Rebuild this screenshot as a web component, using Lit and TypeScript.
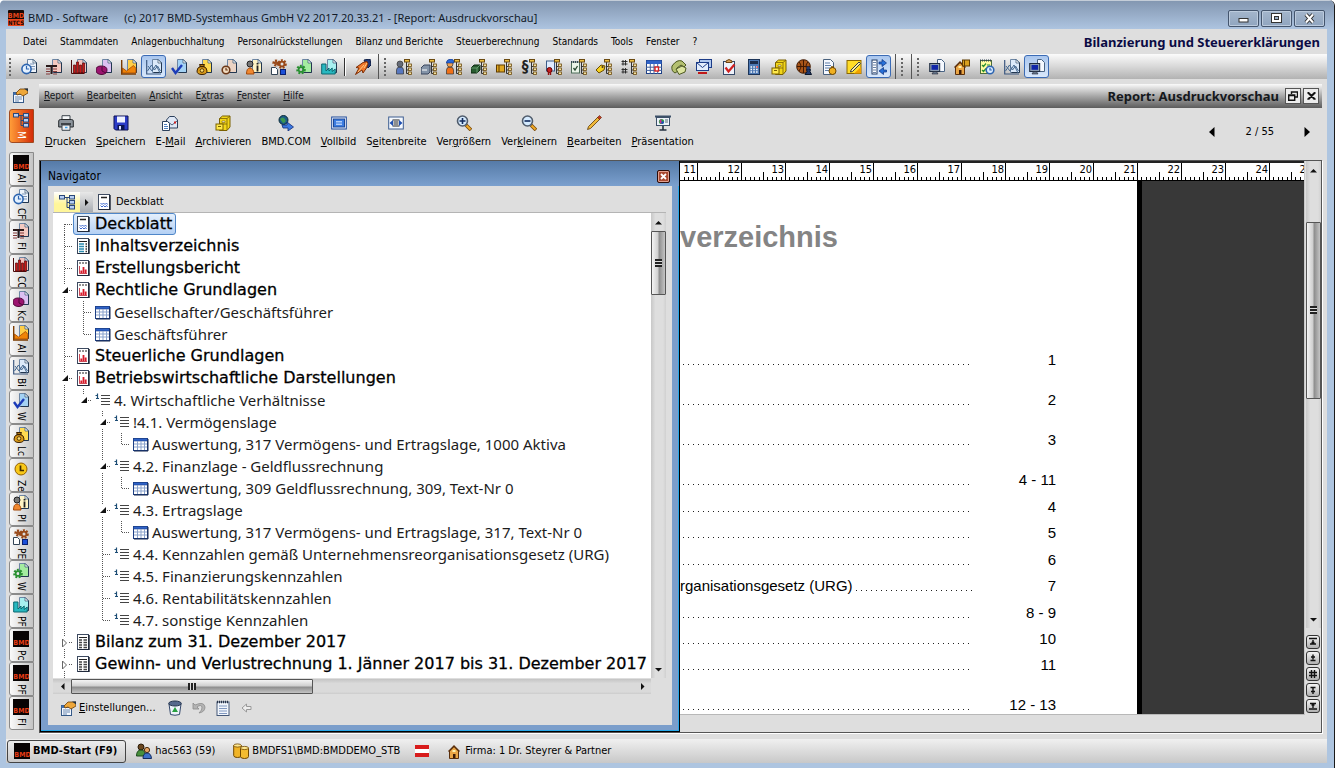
import { LitElement, html, svg, css } from 'lit';
import { customElement, property, state } from 'lit/decorators.js';
import { classMap } from 'lit/directives/class-map.js';

/* ---------- icon parts, all on a 16 x 16 grid ---------- */

const doc = (fill: string) => svg`
  <path d="M6.500 .5h6l3 3v10h-9z" fill=${fill} stroke="#6d86a4"/>
  <path d="M15.500 3.500v10h-8" fill="none" stroke="#22364f"/>
  <path d="M12 .5v3.500h3.500z" fill="#fff" stroke="#34506f" stroke-width=".7"/>`;

const gear = (x: number, y: number, r: number, c: string) => svg`
  <circle cx=${x} cy=${y} r=${r} fill="none" stroke=${c} stroke-width="2.400" stroke-dasharray="1.800 1.300"/>
  <circle cx=${x} cy=${y} r=${r - 1.2} fill="none" stroke=${c} stroke-width="1.800"/>`;

const clock = (x: number, y: number, r: number, face: string, rim: string) => svg`
  <circle cx=${x} cy=${y} r=${r} fill=${face} stroke=${rim} stroke-width="1.600"/>
  <path d="M${x} ${y - r + 1.6}V${y}h${r - 2}" fill="none" stroke=${rim} stroke-width="1.200"/>`;

const branch = svg`
  <path d="M10.500 3v11.500M10.500 7.500h2M10.500 11h2M10.500 14.500h2" fill="none" stroke="#333"/>
  <rect x="8.500" y=".5" width="5" height="2.500" fill="#f0c040" stroke="#6b4a10"/>
  <rect x="12.500" y="5" width="3" height="2.500" fill="#f4e2a0" stroke="#6b4a10" stroke-width=".8"/>
  <rect x="12.500" y="9" width="3" height="2.500" fill="#f4e2a0" stroke="#6b4a10" stroke-width=".8"/>
  <rect x="12.500" y="13" width="3" height="2.500" fill="#f4e2a0" stroke="#6b4a10" stroke-width=".8"/>`;

const person = (head: string, body: string, x = 4) => svg`
  <path d="M${x - 3.5} 15v-4q0-3 3.500-3t3.500 3v4z" fill=${body} stroke="#333" stroke-width=".7"/>
  <circle cx=${x} cy="5" r="3" fill=${head} stroke="#333" stroke-width=".7"/>`;

const house = svg`
  <path d="M1.500 8L6 3.500 10.500 8v7.500h-9z" fill="#eaa544" stroke="#5a2f0c"/>
  <path d="M.5 8.500L6 3l5.500 5.500" fill="none" stroke="#5a2f0c" stroke-width="1.400"/>
  <path d="M5 15v-4h2.500v4z" fill="#3c1c08"/><rect x="4.500" y="7" width="3" height="2" fill="#fff3b0"/>`;

const monitor = svg`
  <path d="M8.500 .5h4l3 3v9h-7z" fill="#f5f9ff" stroke="#4a6484"/>
  <rect x=".7" y="4.500" width="10" height="8" fill="#8b9bb0" stroke="#1e2c40"/>
  <rect x="2.500" y="6" width="6.500" height="4.800" fill="#1026a8"/><path d="M3 15h6l-1.500-2.500h-3z" fill="#66788c" stroke="#223" stroke-width=".6"/>`;

const cabinet = svg`
  <path d="M4.500 3.500l3-2.500h7.500v11l-3 3.500H4.500z" fill="#f2d619" stroke="#7a6000"/>
  <path d="M12 3.500V15M4.500 3.500H12l3-2.500M5 9h7" fill="none" stroke="#7a6000" stroke-width=".8"/>
  <path d="M7 6h3v1.500H7z" fill="#fff" stroke="#7a6000" stroke-width=".6"/>
  <rect x="1" y="9" width="7" height="6" fill="#ffe94a" stroke="#7a6000"/><path d="M3 11.500h3" stroke="#7a6000"/>`;

const magnifier = (plus: boolean) => svg`
  <path d="M10 10l5 5" stroke="#7a4a08" stroke-width="3.600"/><path d="M10.500 10.500l4 4" stroke="#f0aa28" stroke-width="2"/>
  <circle cx="6.500" cy="6" r="5" fill="#d5ebff" stroke="#505c6c" stroke-width="1.600"/>
  <path d=${plus ? 'M3.500 6h6M6.500 3v6' : 'M3.500 6h6'} stroke="#112a5c" stroke-width="1.600"/>`;

const hand = svg`
  <rect x="1.500" y="5.500" width="10" height="10" fill="#f4f8ff" stroke="#365a88"/><rect x="1.500" y="5.500" width="10" height="2.500" fill="#3f71b5"/>
  <path d="M3 10h7M3 12h7M3 14h4" stroke="#6a89b0"/>
  <path d="M4 6l4-4h8v4l-5 3-3-2-3 1z" fill="#eea73a" stroke="#6a3c06" stroke-width=".8"/><path d="M12 1.500h4v3z" fill="#234"/>`;

const pageIcon = (inner: unknown) => svg`
  <rect x="1.500" y=".5" width="11" height="15" fill="#fff" stroke="#3d4a60"/><path d="M13 1v15H2" fill="none" stroke="#182030" stroke-width="1.400"/>${inner}`;

const gridIcon = svg`
  <rect x=".5" y="1.500" width="15" height="13" fill="#fff" stroke="#1d3f85"/><rect x=".5" y="1.500" width="15" height="3.500" fill="#2f63c8"/>
  <path d="M0 8.200h16M0 11.400h16M4.300 5v10M8 5v10M11.700 5v10" stroke="#3f5f9c"/>`;

const icons: Record<string, unknown> = {
  logo: svg`<rect width="16" height="16" rx="1" fill="#180804"/><rect y="9" width="16" height="7" fill="#e8461c"/>
    <text x="8" y="7.500" font-size="7" font-weight="700" text-anchor="middle" fill="#e8461c">BMD</text>
    <text x="8" y="15" font-size="6" font-weight="700" text-anchor="middle" fill="#180804">NTCS</text>`,
  bmd: svg`<rect width="16" height="16" fill="#080404"/><text x="8.500" y="14" font-size="7" font-weight="700" text-anchor="middle" fill="#e83c14">BMD</text>`,
  clockdoc: svg`${doc('#eef4fb')}<path d="M9 5h4M9 7.500h5M9 10h5" stroke="#7d95b5"/>${clock(5.5, 10, 4.6, '#e4f1ff', '#2c64b0')}`,
  tdoc: svg`${doc('#f3c9c0')}<path d="M0 7h11M5.500 7v8" stroke="#281818" stroke-width="2"/><path d="M0 10h4M0 12.500h4M0 15h4M7 10h4M7 12.500h4M7 15h4" stroke="#843838"/>`,
  bars: svg`${doc('#f2c2bc')}<path d="M.5 1v13.500h13" fill="none" stroke="#4c0c0c"/><path d="M2.500 6h2v8h-2zM5.500 3h2v11h-2zM8.500 6h2v8h-2zM11.500 4h2v10h-2z" fill="#c81818" stroke="#5c0808" stroke-width=".7"/>`,
  purple: svg`${doc('#dcc0f2')}<path d="M0 11q0-4 5-4 6 0 6 4t-5 4.500q-6 0-6-4.500z" fill="#9c1470" stroke="#500838"/><path d="M6 8v4l4 2" fill="none" stroke="#500838"/>`,
  orange: svg`${doc('#ffce48')}<path d="M.7 1v14H15" fill="none" stroke="#7c3c00" stroke-width="1.400"/><path d="M1.500 14V9l4 3 5-4 2-1.500 2.500 3V14z" fill="#f08408" stroke="#a04800" stroke-width=".8"/>`,
  chart: svg`${doc('#dceafa')}<path d="M.7 1v14H15" fill="none" stroke="#3c5880" stroke-width="1.200"/><path d="M1.500 12l4-6 3 5 3-4 3 5M2 7l4 5 4-6 4 8" fill="none" stroke="#446890"/>`,
  check: svg`${doc('#a4d2f4')}<path d="M1 9l3.500 5L11 6" fill="none" stroke="#1c3cb8" stroke-width="2.400"/>`,
  bag: svg`${doc('#ffda50')}<path d="M3.500 5.500h5l-1 2q3.500 1 3.500 4.500 0 3.500-5 3.500T1 12q0-3.500 3.500-4.500z" fill="#d89a18" stroke="#3c2000"/><path d="M3.500 7.500h5" stroke="#3c2000" stroke-width="1.400"/><circle cx="6" cy="11.500" r="1.800" fill="#ffe070" stroke="#3c2000" stroke-width=".8"/>`,
  brown: svg`${doc('#ecd4c4')}${clock(5, 11, 3.8, '#f2dcc0', '#6c3818')}`,
  info: svg`${doc('#fff4c4')}<path d="M11.500 4v1.500M11.500 6.500v6" stroke="#222" stroke-width="1.800"/><circle cx="4" cy="5" r="3" fill="#777" stroke="#222"/><path d="M.5 15q0-6 3.500-6t4 6z" fill="#f08830" stroke="#a44808"/>`,
  gears: svg`${gear(11, 5, 3.6, '#984818')}${gear(5, 4, 2.4, '#984818')}<path d="M.5 8.500h4l2 2v5h-6z" fill="#fff" stroke="#345"/><rect x="9.500" y="10.500" width="5" height="5" fill="#1c50d8" stroke="#0a2070"/>`,
  green: svg`${doc('#a4eca0')}${gear(5, 10.5, 3.6, '#289030')}`,
  teal: svg`${doc('#a8f0f0')}<path d="M.7 5v10h13.500v-5l-3 2.500V9L8 12V9l-3 3V5z" fill="#28b8c0" stroke="#0c6870"/>`,
  launch: svg`<path d="M9 1l6-1 1 6-3 3z" fill="#203c80" stroke="#0c1c44"/><path d="M.5 15.500L4 9 1 8.500 8 3.500 12 2.500 13 5 11.500 9 8 14l-1-3z" fill="#f0782c" stroke="#7c2c04"/><path d="M3 13l6-7M9 9l3-5" stroke="#ffca80"/>`,
  person: svg`${person('#666c78', '#5878c0', 4)}${branch}`,
  printer2: svg`<path d="M0 9l3-3h6v7l-2 2H0z" fill="#8494a8" stroke="#38445c"/><path d="M1 11h5" stroke="#fff"/>${branch}`,
  worker: svg`${person('#f0a050', '#f07018', 4)}<path d="M0 4q1-4 5-4 3 0 3 4z" fill="#2868d8" stroke="#103080" stroke-width=".6"/>${branch}`,
  box: svg`<path d="M0 9l3-3h6v5l-3 3H0z" fill="#285c30" stroke="#0c2810"/><path d="M0 9h6l3-3M6 9v5" stroke="#80b488" stroke-width=".7" fill="none"/>${branch}`,
  book: svg`<rect x=".5" y="6" width="8" height="7" fill="#e0a820" stroke="#603c00"/><path d="M3 6v7" stroke="#603c00"/>${branch}`,
  para: svg`<text x="4" y="13" font-size="15" font-weight="700" text-anchor="middle" fill="#222">§</text>${branch}`,
  cert: svg`<rect x=".5" y="2" width="8" height="10" fill="#e0ecff" stroke="#3c5c88"/><circle cx="3.500" cy="11" r="2.500" fill="#c82020" stroke="#600"/><path d="M2.500 13v3M4.500 13v3" stroke="#901010" stroke-width="1.400"/>${branch}`,
  list: svg`<rect x=".5" y="3" width="8" height="11" fill="#eaf4e8" stroke="#4c6c58"/><path d="M0 3h9" stroke="#345" stroke-dasharray="1 1" stroke-width="2"/><path d="M2.500 9l1.500 2L6.500 7" stroke="#284830" fill="none" stroke-width="1.300"/>${branch}`,
  tag: svg`<path d="M0 11l5-5 4 1-1 4-5 3z" fill="#f4d020" stroke="#6c4c00"/><circle cx="6.500" cy="8" r="1" fill="#432"/>${branch}`,
  hash: svg`<path d="M2 1v5.500M4.500 1v5.500M.5 2.500h6M.5 5h6M2 9v5.500M4.500 9v5.500M.5 10.500h6M.5 13h6" stroke="#222" stroke-width=".9"/>${branch}`,
  calendar: svg`${gridIcon}<rect x="9" y="8" width="3.500" height="4" fill="#fff" stroke="#d82020" stroke-width="1.400"/>`,
  phone: svg`<path d="M1 7q5-7 10-5l4 4-2 2-3-2-4 3 1 3-3 2q-4-2-3-7z" fill="#b4c070" stroke="#4c5820"/><path d="M5 10l6-3 4 2-1 4-6 2.500z" fill="#dce4a0" stroke="#4c5820"/>`,
  mails: svg`<rect x="3.500" y=".5" width="12" height="8" fill="#b0c8ee" stroke="#1c3c88"/><rect x=".5" y="3.500" width="12" height="8" fill="#e4eefc" stroke="#1c3c88"/><path d="M.5 3.500l6 5 6-5" fill="none" stroke="#1c3c88"/><path d="M2 14h9" stroke="#c01818" stroke-width="2"/>`,
  clip: svg`<rect x="2.500" y="2.500" width="11" height="13" fill="#eef2fa" stroke="#344868"/><path d="M5 3.500V2q3-3 6 0v1.500z" fill="#d8a058" stroke="#6c4010"/><path d="M4.500 8.500l3 4 6-7" fill="none" stroke="#d02020" stroke-width="2.200"/>`,
  calc: svg`<rect x="2.500" y=".5" width="11" height="15" fill="#4c78b4" stroke="#1c3458"/><rect x="4" y="2" width="8" height="3" fill="#1c2c4c"/><path d="M4.500 8h7.500M4.500 10.500h7.500M4.500 13h7.500" stroke="#fff" stroke-width="1.500" stroke-dasharray="1.500 1.300"/><path d="M10.500 8h1.500" stroke="#f33" stroke-width="1.500"/>`,
  cabinet,
  basket: svg`<circle cx="7.500" cy="7.500" r="6.800" fill="#a85418" stroke="#401800"/><path d="M7.500 1v13M1 7.500h13M3 3q4 4 0 9M12 3q-4 4 0 9" stroke="#401800" fill="none"/><path d="M9 15.500h6.500l-1.500-3 .5-2h-4l.5 2z" fill="#20386c" stroke="#081428"/><circle cx="12.300" cy="9" r="1.800" fill="#20386c"/>`,
  moneydoc: svg`<path d="M2.500 .5h7l3 3v12h-10z" fill="#f6f9ff" stroke="#48607c"/><path d="M4 4h5M4 6.500h6M4 9h6M4 11.500h4" stroke="#5c7ca8"/><circle cx="11.500" cy="12" r="3.500" fill="#f0b020" stroke="#704800"/><path d="M10 8h3" stroke="#704800" stroke-width="1.500"/>`,
  note: svg`<rect x="1" y="1.500" width="14" height="13" fill="#ffdc28" stroke="#8c6800"/><path d="M8 14.500h7V8z" fill="#f0a000"/><path d="M5 11l8-8 1.500 1.500-8 8L4.500 13z" fill="#fff2a0" stroke="#30384c"/>`,
  switch: svg`<rect x="1" y="1" width="5" height="14" fill="#fff" stroke="#243c64"/><path d="M2 3.500h3M2 6h3M2 8.500h3M2 11h3M2 13.500h3" stroke="#6c84a8"/><path d="M8 3h3V.5L15.500 4 11 7.500V5H8zM15.500 11h-3V8.500L8 12l4.500 3.500V13h3z" fill="#2870d8" stroke="#0c3080" stroke-width=".7"/>`,
  monitor,
  housebox: svg`${house}<rect x="8.500" y="1" width="7" height="6" fill="#d8a020" stroke="#603c00"/><path d="M10.500 1v6" stroke="#603c00"/>`,
  todo: svg`<rect x="1.500" y="1.500" width="11" height="13" fill="#fffba0" stroke="#4c6c3c"/><path d="M1 1.500h12" stroke="#345" stroke-width="2" stroke-dasharray="1 1"/><path d="M3 6l1.500 1.500L7 4.500M3 11l1.500 1.500L7 9.500M8 6h3" stroke="#289030" fill="none" stroke-width="1.200"/>${clock(11, 11, 3.8, '#dcecff', '#2c64b0')}`,
  hand,
  tree: svg`<path d="M5 3.500h5M8 3.500v10h2M8 8.500h2" stroke="#2c4878" fill="none"/><rect x=".5" y="1.500" width="5" height="3.500" fill="#b8d0f4" stroke="#2c4878"/><rect x="10.500" y="1.500" width="5" height="3.500" fill="#b8d0f4" stroke="#2c4878"/><rect x="10.500" y="6.500" width="5" height="3.500" fill="#b8d0f4" stroke="#2c4878"/><rect x="10.500" y="11.500" width="5" height="3.500" fill="#b8d0f4" stroke="#2c4878"/>`,
  clock: svg`<circle cx="8" cy="8" r="6" fill="#f8c818" stroke="#946000"/><path d="M7.500 4.500v5H11" stroke="#402c00" stroke-width="1.700" fill="none"/>`,
  print: svg`<path d="M4 5V.7h8V5z" fill="#f6f8fa" stroke="#3c444c"/><path d="M.7 6q0-1.500 2-1.500h10.600q2 0 2 1.500v6H.7z" fill="#8c949c" stroke="#24282c"/><path d="M3 9h10" stroke="#24282c" stroke-width="1.600"/><path d="M4 10h8v5.300H4z" fill="#eef2f6" stroke="#3c444c"/><path d="M7 12.500h2.500" stroke="#40a0e8" stroke-width="1.600"/>`,
  save: svg`<path d="M1 1h14v14H2.500L1 13.500z" fill="#2c3cc8" stroke="#0c1050"/><rect x="4" y="1.500" width="8" height="6" fill="#eef2ff"/><rect x="4.500" y="10" width="7" height="5" fill="#0c1450"/><rect x="6" y="11" width="2" height="3.500" fill="#dfe6ff"/>`,
  mail: svg`<path d="M4.500 5l3-3.500h5L15.500 5v8h-11z" fill="#dfe8f6" stroke="#2c405c"/><path d="M5 6l5 4 5-4" fill="none" stroke="#2c405c" stroke-width=".8"/><rect x="12" y="6.500" width="2" height="2" fill="#d02020"/><path d="M.5 6.500h5l2 2v7h-7z" fill="#fff" stroke="#2c405c"/><path d="M2 9.500h3M2 11.500h4M2 13.500h4" stroke="#5080c0"/>`,
  globe: svg`<circle cx="5.500" cy="5" r="4.500" fill="#1c5c88" stroke="#0c2c38"/><path d="M2 4q3-3 5 0t-2 4z" fill="#3c9850"/><path d="M4 10h5V7l6.500 5L10 16v-3H5z" fill="#3c78e0" stroke="#102c78" stroke-width=".8"/>`,
  screen: svg`<rect x=".7" y="2" width="14.600" height="12" fill="#f2f6ff" stroke="#1c4898"/><rect x="2.500" y="4" width="11" height="8" fill="#3c7ce0" stroke="#1c4898"/><path d="M5 6.500h6M5 8h6M5 9.500h6" stroke="#cfe2ff" stroke-width=".8"/>`,
  width: svg`<rect x=".7" y="2" width="14.600" height="12" fill="#f6faff" stroke="#3c5c90"/><path d="M4.500 5h7M5.500 7h5M5.500 9h5M4.500 11h7" stroke="#222"/><path d="M1.500 8L5 5v6zM14.500 8L11 5v6z" fill="#2050b0"/>`,
  zoomin: magnifier(true),
  zoomout: magnifier(false),
  pencil: svg`<path d="M1.500 14.500l1-3 9.500-9.500 2 2-9.500 9.500z" fill="#f0b838" stroke="#5c3804" stroke-width=".8"/><path d="M11.500 2.500l2-2 2 2-2 2z" fill="#c03c20" stroke="#5c1804" stroke-width=".6"/>`,
  present: svg`<path d="M0 1.500h16" stroke="#3c5068" stroke-width="2"/><rect x="1.500" y="2.500" width="13" height="8" fill="#eef3fa" stroke="#3c5068"/><circle cx="6.500" cy="6.500" r="2.600" fill="#28a040"/><path d="M6.500 6.500V4a2.600 2.600 0 0 0 0 5z" fill="#d02890"/><path d="M6.500 6.500v2.600a2.600 2.600 0 0 0 2.500-2.600z" fill="#2040d0"/><path d="M10 5h3M10 7h3" stroke="#567"/><path d="M8 11v3.500M4.500 15h7" stroke="#243040" stroke-width="1.600"/>`,
  cover: pageIcon(svg`<path d="M4 3.500h6" stroke="#222" stroke-width="1.400"/><path d="M3.500 9l1.500 1.500L6.500 9 8 10.500 9.500 9l1 1.500M3.500 11.500L5 13l1.500-1.500L8 13l1.500-1.500 1 1.500" stroke="#3c68d0" fill="none"/>`),
  toc: pageIcon(svg`<path d="M3 3.500h8" stroke="#222"/><path d="M3 6h5M3 8.500h5M3 11h5M3 13.500h5" stroke="#2c8cb0" stroke-width="1.500"/><path d="M9.500 6h1.500M9.500 8.500h1.500M9.500 11h1.500M9.500 13.500h1.500" stroke="#333" stroke-width="1.500"/>`),
  report: pageIcon(svg`<path d="M3 3h8" stroke="#222" stroke-dasharray="2 1"/><path d="M3.500 6v7.500H11" stroke="#c01c2c" fill="none" stroke-width=".8"/><path d="M5.300 13v-2.500M7.500 13V7M9.700 13V9.500" stroke="#d81c2c" stroke-width="1.800"/>`),
  ledger: pageIcon(svg`<path d="M3 3.500h8" stroke="#222"/><path d="M3 6h3M3 8.500h3M3 11h3M3 13.500h3M7.500 6H11M7.500 8.500H11M7.500 11H11M7.500 13.500H11" stroke="#444" stroke-width="1.300"/>`),
  grid: svg`<rect x=".5" y="2.500" width="14" height="12" fill="#fff" stroke="#1d3f85"/><rect x=".5" y="2.500" width="14" height="2.500" fill="#2f63c8" stroke="#1d3f85" stroke-width=".6"/><path d="M1 8h13M1 11h13M4.500 5v9M8 5v9M11.500 5v9" stroke="#8ba3cc"/><path d="M15 3v12H1" fill="none" stroke="#14264c"/>`,
  text: svg`<path d="M.5 3.500h2M2.500 1.500v5M1 6.500h3" stroke="#1c4c74" fill="none" stroke-width="1.200"/><path d="M6 3.500h9M6 6.500h9M6 9.500h9M6 12.500h9" stroke="#444"/>`,
  trash: svg`<path d="M2 4l1.500 10.500q4.500 1.500 9 0L14 4z" fill="#eef4fa" stroke="#34486c"/><ellipse cx="8" cy="3.500" rx="6.300" ry="2.500" fill="#56698c" stroke="#24344c"/><path d="M8 7l3 5H5z" fill="#28a040"/>`,
  undo: svg`<path d="M2 3v6h6L6 7q4-3 5 0 .5 3-3 6 6-1 6-6-1-6-10-2z" fill="#b4b4b4" stroke="#8c8c8c" stroke-width=".8"/>`,
  notepad: svg`<rect x="2" y="2" width="12" height="13.500" fill="#f2f6fc" stroke="#445878"/><path d="M2 2h12" stroke="#283448" stroke-width="2.400" stroke-dasharray="1 1"/><path d="M4 6h8M4 8.500h8M4 11h8M4 13.500h8" stroke="#8098c0"/>`,
  back: svg`<path d="M3 8l4.500-4v2.500H12v3H7.500V12z" fill="#eee" stroke="#999"/>`,
  users: svg`<circle cx="5" cy="4" r="3" fill="#6c4820" stroke="#2c1c08"/><path d="M.5 13q0-6 4.500-6t4.500 6z" fill="#48903c" stroke="#1c481c"/><circle cx="11" cy="7" r="2.600" fill="#e8a868" stroke="#482808"/><path d="M7 15.500q0-5.500 4-5.500t4.500 5.500z" fill="#3c70c8" stroke="#142c60"/>`,
  db: svg`<path d="M.7 2.500v10q0 2 3.800 2t3.800-2v-10z" fill="#f0b428" stroke="#704800"/><ellipse cx="4.500" cy="2.500" rx="3.800" ry="1.600" fill="#ffe890" stroke="#704800" stroke-width=".8"/><path d="M7.500 5v8.500q0 2 4 2t4-2V5z" fill="#f4bc30" stroke="#704800"/><ellipse cx="11.500" cy="5" rx="4" ry="1.600" fill="#ffe890" stroke="#704800" stroke-width=".8"/>`,
  flag: svg`<rect x="1" y="2" width="14" height="12" fill="#fff"/><path d="M1 4h14M1 12h14" stroke="#d81c1c" stroke-width="4"/>`,
  home: svg`<g transform="translate(2 0)">${house}</g>`,
};

const icon = (name: string) => html`<svg class="icon" viewBox="0 0 16 16" width="16" height="16" aria-hidden="true">${icons[name]}</svg>`;

/* An underscore in a label stands before its access key. */
const keyed = (label: string) => {
  const i = label.indexOf('_');
  return i < 0 ? html`${label}` : html`${label.slice(0, i)}<u>${label[i + 1]}</u>${label.slice(i + 2)}`;
};

const arrow = (dir: 'up' | 'down' | 'left' | 'right') => {
  const d = { up: 'M0 5.500h7L3.500 2z', down: 'M0 2h7L3.500 5.500z', left: 'M5.500 0v7L2 3.500z', right: 'M2 0v7l3.500-3.500z' }[dir];
  return html`<svg viewBox="0 0 7 7" width="7" height="7" aria-hidden="true"><path d=${d} fill="#111" /></svg>`;
};

const menu = ['Datei', 'Stammdaten', 'Anlagenbuchhaltung', 'Personalrückstellungen', 'Bilanz und Berichte', 'Steuerberechnung', 'Standards', 'Tools', 'Fenster', '?'];
const reportMenu = ['_Report', '_Bearbeiten', '_Ansicht', 'E_xtras', '_Fenster', '_Hilfe'];
const bars: string[][] = [
  ['clockdoc', 'tdoc', 'bars', 'purple', 'orange', '*chart', 'check', 'bag', 'brown', 'info', 'gears', 'green', 'teal', '|', 'launch'],
  ['person', 'printer2', 'worker', 'box', 'book', 'para', 'cert', 'list', 'tag', 'hash', 'calendar', 'phone', 'mails', 'clip', 'calc', 'cabinet', 'basket', 'moneydoc', 'note', '*switch'],
  [],
  ['monitor', 'housebox', 'todo', 'chart', '*monitor'],
];
const actions: [string, string][] = [
  ['print', '_Drucken'], ['save', '_Speichern'], ['mail', 'E-_Mail'], ['cabinet', '_Archivieren'], ['globe', 'BMD.COM'], ['screen', '_Vollbild'],
  ['width', 'S_eitenbreite'], ['zoomin', 'Ver_größern'], ['zoomout', 'Ver_kleinern'], ['pencil', '_Bearbeiten'], ['present', '_Präsentation'],
];
const tabs: [string, string][] = [
  ['bmd', 'AI'], ['clockdoc', 'CF'], ['tdoc', 'FI'], ['bars', 'CO'], ['purple', 'Kc'], ['orange', 'AI'], ['chart', 'Bi'], ['check', 'W'], ['bag', 'Lc'],
  ['clock', 'Ze'], ['info', 'PI'], ['gears', 'PE'], ['green', 'W'], ['teal', 'PF'], ['bmd', 'Pc'], ['bmd', 'PF'], ['bmd', 'FI'],
];

/* guides: one letter a column; f first, v line, t tee, l corner, o blank; upper case adds an expander */
interface Node { guides: string; icon: string; text: string; open?: boolean }
const nodes: Node[] = [
  { guides: 'f', icon: 'cover', text: 'Deckblatt' },
  { guides: 't', icon: 'toc', text: 'Inhaltsverzeichnis' },
  { guides: 't', icon: 'report', text: 'Erstellungsbericht' },
  { guides: 'T', icon: 'report', text: 'Rechtliche Grundlagen', open: true },
  { guides: 'vt', icon: 'grid', text: 'Gesellschafter/Geschäftsführer' },
  { guides: 'vl', icon: 'grid', text: 'Geschäftsführer' },
  { guides: 't', icon: 'report', text: 'Steuerliche Grundlagen' },
  { guides: 'T', icon: 'report', text: 'Betriebswirtschaftliche Darstellungen', open: true },
  { guides: 'vL', icon: 'text', text: '4. Wirtschaftliche Verhältnisse', open: true },
  { guides: 'voT', icon: 'text', text: '!4.1. Vermögenslage', open: true },
  { guides: 'vovl', icon: 'grid', text: 'Auswertung, 317 Vermögens- und Ertragslage, 1000 Aktiva' },
  { guides: 'voT', icon: 'text', text: '4.2. Finanzlage - Geldflussrechnung', open: true },
  { guides: 'vovl', icon: 'grid', text: 'Auswertung, 309 Geldflussrechnung, 309, Text-Nr 0' },
  { guides: 'voT', icon: 'text', text: '4.3. Ertragslage', open: true },
  { guides: 'vovl', icon: 'grid', text: 'Auswertung, 317 Vermögens- und Ertragslage, 317, Text-Nr 0' },
  { guides: 'vot', icon: 'text', text: '4.4. Kennzahlen gemäß Unternehmensreorganisationsgesetz (URG)' },
  { guides: 'vot', icon: 'text', text: '4.5. Finanzierungskennzahlen' },
  { guides: 'vot', icon: 'text', text: '4.6. Rentabilitätskennzahlen' },
  { guides: 'vol', icon: 'text', text: '4.7. sonstige Kennzahlen' },
  { guides: 'T', icon: 'ledger', text: 'Bilanz zum 31. Dezember 2017' },
  { guides: 'T', icon: 'ledger', text: 'Gewinn- und Verlustrechnung 1. Jänner 2017 bis 31. Dezember 2017' },
  { guides: 't', icon: 'ledger', text: '' },
];

const guide = (g: string, open?: boolean) => {
  const expander = g !== g.toLowerCase();
  const k = g.toLowerCase();
  const paths: Record<string, string> = {
    f: 'M10.500 11v11M11 11.500h9', v: 'M10.500 0v22', t: 'M10.500 0v22M11 11.500h9', l: 'M10.500 0v11M11 11.500h9', o: '',
  };
  const mark = expander
    ? svg`<rect x="6" y="5" width="9" height="13" fill="#fff"/>${open
        ? svg`<path d="M14 8v6H8z" fill="#111"/>`
        : svg`<path d="M8.500 8v8l4-4z" fill="#fff" stroke="#666"/>`}`
    : '';
  return html`<svg class="guide" viewBox="0 0 19 22" width="19" height="22" aria-hidden="true">
    <path d=${paths[k]} fill="none" stroke="#555" stroke-dasharray="1 1" shape-rendering="crispEdges" />${mark}</svg>`;
};

const contents: [string, string, string][] = [
  ['', '1', 'sec'], ['', '2', 'sec'], ['', '3', 'sec'], ['', '4 - 11', 'sec'], ['', '4', 'odd'], ['', '5', ''], ['', '6', 'odd'],
  ['rganisationsgesetz (URG)', '7', ''], ['', '8 - 9', 'odd'], ['', '10', ''], ['', '11', ''], ['', '12 - 13', 'sec'],
];

const ticks = svg`<path d="M22.500 11v8" stroke="#000"/>
  <path d="M4.500 16v3M9.500 16v3M13.500 16v3M18.500 16v3M26.500 16v3M31.500 16v3M35.500 16v3M40.500 16v3" stroke="#000"/>`;

@customElement('scroll-bar')
export class ScrollBar extends LitElement {
  @property({ type: Boolean, reflect: true }) horizontal = false;
  @property({ type: Number }) before = 0;
  @property({ type: Number }) size = 30;

  static styles = css`
    :host { display: flex; flex-direction: column; width: 15px; box-sizing: border-box; background: linear-gradient(90deg, #c8c8c8, #dedede 30%, #dedede 80%, #d0d0d0); }
    :host([horizontal]) { flex-direction: row; width: auto; height: 15px; background: linear-gradient(#c4c4c4, #dadada 30%, #dadada 85%, #cccccc); }
    button { flex: none; width: 100%; height: 18px; padding: 0; border: 0; background: none; display: grid; place-items: center; }
    :host([horizontal]) button { width: 18px; height: 100%; }
    .track { flex: 1; min-height: 0; min-width: 0; display: flex; flex-direction: column; }
    :host([horizontal]) .track { flex-direction: row; }
    .thumb { flex: none; display: grid; place-items: center; box-sizing: border-box; border: 1px solid #555; border-radius: 1px; background: linear-gradient(90deg, #f4f4f4, #cfcfcf 45%, #8e8e8e 55%, #c4c4c4); }
    :host([horizontal]) .thumb { background: linear-gradient(#f4f4f4, #cfcfcf 45%, #8e8e8e 55%, #c4c4c4); }
    .grip { width: 7px; height: 8px; background: repeating-linear-gradient(#222 0 2px, #ddd 2px 3px); }
    :host([horizontal]) .grip { width: 8px; height: 7px; background: repeating-linear-gradient(90deg, #222 0 2px, #ddd 2px 3px); }
  `;

  render() {
    const side = this.horizontal ? 'width' : 'height';
    return html`
      <button aria-label="Zurück">${arrow(this.horizontal ? 'left' : 'up')}</button>
      <div class="track">
        <div style="${side}:${this.before}%"></div>
        <div class="thumb" style="${side}:${this.size}%"><span class="grip"></span></div>
      </div>
      <button aria-label="Weiter">${arrow(this.horizontal ? 'right' : 'down')}</button>`;
  }
}

@customElement('app-root')
export class AppRoot extends LitElement {
  @state() selected = 0;

  static styles = css`
    :host { display: block; height: 100vh; font: 11px/14px "DejaVu Sans Condensed", "DejaVu Sans", sans-serif; color: #000; }
    * { box-sizing: border-box; }
    button { font: inherit; color: inherit; margin: 0; padding: 0; border: 0; background: none; white-space: nowrap; }
    svg { display: block; flex: none; }
    svg text { font-family: "DejaVu Sans Condensed", sans-serif; }

    .window { height: 100%; display: flex; flex-direction: column; background: #aec5e0; border: solid #1a1a1a; border-width: 0 1px 0 0; border-radius: 5px 6px 0 0; overflow: hidden; }
    .titlebar { flex: none; height: 29px; display: flex; align-items: center; padding: 6px 9px 0 8px; border-top: 1px solid #c4cdd8; background: linear-gradient(#8397b1, #adc4e0); color: #111a28; }
    .titlebar h1 { flex: 1; display: flex; gap: 16px; margin: 0 0 0 4px; font: 11px/16px "Noto Sans", sans-serif; white-space: pre; }
    .frame-buttons { display: flex; gap: 2px; }
    .frame-buttons button { width: 31px; height: 17px; display: grid; place-items: center; border: 1px solid #44556d; border-radius: 2px; box-shadow: inset 0 0 0 1px #bccbdd; background: linear-gradient(#a4b6cc, #90a5bf); }

    .client { flex: 1; min-height: 0; display: flex; flex-direction: column; margin: 0 7px 5px 6px; background: #dedede; }
    .menubar { flex: none; height: 25px; display: flex; align-items: center; padding: 0 7px 0 17px; font-size: 10px; }
    .menubar nav { display: flex; gap: 13px; flex: 1; }
    .strong { font: bold 13px/16px "Noto Sans", sans-serif; white-space: nowrap; margin: 0; }
    .module { color: #0b0b44; }

    .toolbars { flex: none; height: 25px; display: flex; background: linear-gradient(#fbfbfb, #d8d8d8 50%, #b2b2b2); }
    .group { display: flex; padding: 0 3px 0 12px; border-right: 1px solid #555; align-items: center; }
    .group:first-child { padding-left: 10px; }
    .group:nth-child(2) { padding-right: 4px; }
    .group:last-child { border: 0; }
    .group::before { content: ""; width: 2px; height: 18px; margin-left: -7px; margin-right: 5px; background: repeating-linear-gradient(#666 0 2px, transparent 2px 4px); }
    .tool { width: 25px; height: 23px; display: grid; place-items: center; border: 1px solid transparent; border-radius: 3px; }
    .tool.on { border-color: #3b6bb5; background: linear-gradient(#a9c6ee, #d9e8fb); }
    .rule { width: 2px; height: 18px; margin: 0 4px 0 3px; background: #333; border-right: 1px solid #fff; }

    .body { flex: 1; min-height: 0; display: flex; padding-top: 5px; }
    .side { flex: none; width: 33px; padding: 0 5px 0 3px; display: flex; flex-direction: column; align-items: stretch; }
    .side .props { height: 22px; display: grid; place-items: center start; padding-left: 3px; margin-bottom: 3px; }
    .tab { flex: none; height: 34px; width: 25px; overflow: hidden; display: flex; flex-direction: column; align-items: center; gap: 3px; padding: 2px 2px 0 0; border: 1px solid #8a8a8a; border-radius: 3px 0 0 3px; background: linear-gradient(90deg, #fafafa, #c4c4c4); }
    .tab span { writing-mode: vertical-rl; font: 10px/12px "DejaVu Sans Condensed", sans-serif; }
    .tab.on { margin-bottom: 9px; color: #fff; border-color: #a04a20; background: linear-gradient(90deg, #ff9c38, #d42c08); }

    .report { flex: 1; min-width: 0; display: flex; flex-direction: column; padding-right: 5px; }
    .reportbar { flex: none; height: 24px; display: flex; align-items: center; padding: 0 3px 0 5px; background: linear-gradient(#fafafa, #a8a8a8 50%, #5c5c5c); color: #15181c; font-size: 10px; }
    .reportbar nav { display: flex; gap: 13px; flex: 1; }
    .mdi { display: flex; gap: 2px; margin-left: 6px; }
    .mdi button { width: 16px; height: 16px; display: grid; place-items: center; border: 1px solid #555; background: #ececec; }

    .actions { flex: none; height: 52px; display: flex; align-items: center; padding: 0 11px 4px 6px; }
    .actions .set { flex: 1; display: flex; gap: 10px; }
    .action { display: flex; flex-direction: column; align-items: center; gap: 4px; }
    .pager { display: flex; align-items: center; gap: 29px; }

    .viewer { flex: 1; min-height: 0; display: flex; border: 1px solid #555; margin-bottom: 6px; box-shadow: 1px 1px 0 #fff; }

    .navigator { flex: none; width: 640px; display: flex; flex-direction: column; border: solid #000; border-width: 0 1px 1px 1px; background: #7b9ecb; padding-bottom: 6px; box-shadow: inset -1px -1px 0 #28a8e8; }
    .navtitle { flex: none; height: 25px; display: flex; justify-content: space-between; align-items: center; padding: 5px 9px 0 7px; background: linear-gradient(#557aa7, #7ba0ce); }
    .navtitle h2 { margin: 0; font: inherit; font-size: 12px; line-height: 16px; }
    .close { width: 13px; height: 13px; display: grid; place-items: center; background: #a84830; border: 1px solid #2c0c08; border-radius: 2px; box-shadow: inset 0 0 0 1px #e0a090; }
    .navbody { flex: 1; min-height: 0; display: flex; flex-direction: column; margin: 0 7px 0 7px; padding: 0 6px 0 5px; background: #dedede; }
    .crumbs { flex: none; height: 26px; display: flex; align-items: center; padding: 6px 0 0 1px; }
    .crumbs .root { width: 26px; height: 20px; display: grid; place-items: center; background: linear-gradient(#fff, #fff69a 60%); }
    .crumbs .more { width: 13px; height: 20px; display: grid; place-items: center; background: linear-gradient(#e8e8e8, #a8acb2); }
    .crumbs .here { display: flex; align-items: center; gap: 3px; margin-left: 4px; }

    .treebox { flex: 1; min-height: 0; display: grid; grid-template: minmax(0, 1fr) 16px / minmax(0, 1fr) 15px; border-top: 1px solid #b4b4b4; }
    .treebox scroll-bar[horizontal] { margin-top: 1px; }
    .tree { list-style: none; margin: 0; padding: 0 0 0 1px; background: #fff; overflow: hidden; }
    .row { display: flex; height: 22px; white-space: nowrap; }
    .label { height: 22px; display: flex; align-items: center; gap: 3px; padding: 0 5px 0 2px; border: 1px solid transparent; border-radius: 3px; font: 15px/20px "Noto Sans", sans-serif; color: #1c1c1c; }
    .top .label { font: 16px/20px "DejaVu Sans", sans-serif; color: #000; -webkit-text-stroke: .3px #000; }
    .label.on { padding-right: 3px; border-color: #4f86c8; background: linear-gradient(#e4effc, #b4d0f4); }
    .navfoot { flex: none; height: 31px; display: flex; align-items: center; padding: 0 8px 3px 7px; gap: 8px; }
    .navfoot button { display: flex; align-items: center; gap: 3px; }
    .navfoot .settings { margin-right: 3px; }

    .preview { flex: 1; min-width: 0; display: flex; flex-direction: column; padding-bottom: 17px; }
    .previewrow { flex: 1; min-height: 0; display: flex; }
    .sheet { flex: 1; min-width: 0; display: flex; flex-direction: column; border-right: 1px solid #c8c8c8; border-bottom: 1px solid #b8b8b8; }
    .ruler { flex: none; height: 20px; display: flex; overflow: hidden; border-top: 2px solid #222; border-bottom: 1px solid #000; background: #fff; }
    .cm { flex: none; width: 44px; height: 17px; display: grid; grid-template-columns: minmax(0, 1fr); justify-items: end; border-right: 1px solid #000; overflow: hidden; }
    .cm > * { grid-area: 1 / 1; }
    .cm:first-child { width: 18px; }
    .cm svg { margin-top: -2px; }
    .cm span { padding-right: 1px; }
    .canvas { flex: 1; min-height: 0; display: flex; background: #383838; }
    .page { flex: none; width: 457px; background: #fff; box-shadow: 5px 0 0 #000; padding: 39px 81px 0 0; overflow: hidden; clip-path: inset(0 -5px 0 0); font: 15px/18px "Liberation Sans", sans-serif; }
    .page h3 { margin: 0 0 97px; font: bold 29px/34px "Liberation Sans", sans-serif; color: #848484; }
    .entry { display: flex; margin-top: 8px; }
    .entry.odd { margin-top: 9px; }
    .entry.sec { margin-top: 22px; }
    .leader { flex: 1; margin: 0 0 4px 3px; background: linear-gradient(90deg, #222 1px, transparent 1px) left bottom / 5px 1px repeat-x; }
    .num { width: 84px; text-align: right; }

    .rail { flex: none; width: 16px; display: flex; flex-direction: column; padding-left: 1px; }
    .rail scroll-bar { flex: 1; min-height: 0; margin-bottom: 7px; }
    .jump { display: flex; flex-direction: column; gap: 2px; padding-bottom: 2px; }
    .jump button { width: 14px; height: 14px; display: grid; place-items: center; border: 1px solid #333; border-radius: 3px; background: linear-gradient(#f4f4f4, #b0b0b0); }

    .status { flex: none; height: 24px; display: flex; align-items: center; padding: 0 1px; background: linear-gradient(#f0f0f0, #c8c8c8); }
    .status .item { display: flex; align-items: center; gap: 3px; white-space: nowrap; }
    .status .start { height: 23px; padding: 0 8px 0 6px; border: 1px solid #444; border-radius: 3px; font-weight: bold; }
    .status .user { margin: 0 18px 0 10px; }
    .status .flag { margin: 0 16px 0 14px; }
  `;

  private bar(items: string[]) {
    return html`<div class="group" role="toolbar">${items.map((name) =>
      name === '|'
        ? html`<span class="rule"></span>`
        : html`<button class=${classMap({ tool: true, on: name[0] === '*' })} aria-label=${name.replace('*', '')}>${icon(name.replace('*', ''))}</button>`)}</div>`;
  }

  private row(n: Node, i: number) {
    const last = n.guides.length - 1;
    return html`<li class=${classMap({ row: true, top: last === 0 })} role="treeitem" @click=${() => (this.selected = i)}>
      ${[...n.guides].map((g, c) => guide(g, c === last && n.open))}
      <span class=${classMap({ label: true, on: i === this.selected })}>${icon(n.icon)}<span>${n.text}</span></span>
    </li>`;
  }

  render() {
    const glyph = (d: string, w = 10) => html`<svg viewBox="0 0 10 10" width=${w} height=${w} aria-hidden="true"><path d=${d} fill="none" stroke="#111" stroke-width="1.400" /></svg>`;
    return html`<div class="window">
      <header class="titlebar">
        ${icon('logo')}
        <h1><span>BMD - Software</span><span>(c) 2017 BMD-Systemhaus GmbH V2 2017.20.33.21 - [Report: Ausdruckvorschau]</span></h1>
        <div class="frame-buttons">
          <button aria-label="Minimieren"><svg viewBox="0 0 11 11" width="11" height="11"><rect x="1" y="5.500" width="9" height="3.500" fill="#fff" stroke="#333" /></svg></button>
          <button aria-label="Maximieren"><svg viewBox="0 0 11 11" width="11" height="11"><rect x="2" y="2" width="7" height="6" fill="none" stroke="#333" stroke-width="4" /><rect x="2" y="2" width="7" height="6" fill="none" stroke="#fff" stroke-width="2" /></svg></button>
          <button aria-label="Schließen"><svg viewBox="0 0 11 11" width="11" height="11"><path d="M2 1.500l7 8M9 1.500l-7 8" stroke="#333" stroke-width="4" /><path d="M2 1.500l7 8M9 1.500l-7 8" stroke="#fff" stroke-width="2" /></svg></button>
        </div>
      </header>

      <main class="client">
        <div class="menubar">
          <nav>${menu.map((m) => html`<button>${m}</button>`)}</nav>
          <p class="strong module">Bilanzierung und Steuererklärungen</p>
        </div>
        <div class="toolbars">${bars.map((b) => this.bar(b))}</div>

        <div class="body">
          <aside class="side">
            <button class="props" aria-label="Eigenschaften">${icon('hand')}</button>
            <button class="tab on">${icon('tree')}<span>M</span></button>
            ${tabs.map(([i, t]) => html`<button class="tab">${icon(i)}<span>${t}</span></button>`)}
          </aside>

          <section class="report">
            <div class="reportbar">
              <nav>${reportMenu.map((m) => html`<button>${keyed(m)}</button>`)}</nav>
              <p class="strong">Report: Ausdruckvorschau</p>
              <div class="mdi">
                <button aria-label="Wiederherstellen">${glyph('M3.500 3V1h6v5H7M.7 4h6v5.300h-6zM.7 4.500h6')}</button>
                <button aria-label="Schließen">${glyph('M1.500 1.500l7 7M8.500 1.500l-7 7M2.500 1.500l7 7M9.500 1.500l-7 7')}</button>
              </div>
            </div>

            <div class="actions">
              <div class="set">${actions.map(([i, t]) => html`<button class="action">${icon(i)}<span>${keyed(t)}</span></button>`)}</div>
              <div class="pager">
                <button aria-label="Vorige Seite"><svg viewBox="0 0 8 10" width="8" height="10"><path d="M6.500 0v10L1 5z" /></svg></button>
                <span>2 / 55</span>
                <button aria-label="Nächste Seite"><svg viewBox="0 0 8 10" width="8" height="10"><path d="M1.500 0v10L7 5z" /></svg></button>
              </div>
            </div>

            <div class="viewer">
              <section class="navigator">
                <div class="navtitle"><h2>Navigator</h2>
                  <button class="close" aria-label="Schließen"><svg viewBox="0 0 7 7" width="7" height="7"><path d="M1 1l5 5M6 1L1 6" stroke="#fff" stroke-width="1.800" /></svg></button>
                </div>
                <div class="navbody">
                  <div class="crumbs">
                    <button class="root" aria-label="Struktur">${icon('tree')}</button>
                    <button class="more" aria-label="Mehr">${arrow('right')}</button>
                    <span class="here">${icon('cover')}<span>Deckblatt</span></span>
                  </div>
                  <div class="treebox">
                    <ul class="tree" role="tree">${nodes.map((n, i) => this.row(n, i))}</ul>
                    <scroll-bar .before=${0} .size=${15}></scroll-bar>
                    <scroll-bar horizontal .before=${0} .size=${43}></scroll-bar>
                  </div>
                  <div class="navfoot">
                    <button class="settings">${icon('hand')}<span>${keyed('_Einstellungen...')}</span></button>
                    <button aria-label="Papierkorb">${icon('trash')}</button>
                    <button aria-label="Rückgängig">${icon('undo')}</button>
                    <button aria-label="Notiz">${icon('notepad')}</button>
                    <button aria-label="Zurück">${icon('back')}</button>
                  </div>
                </div>
              </section>

              <section class="preview">
                <div class="previewrow">
                  <div class="sheet">
                    <div class="ruler">${Array.from({ length: 15 }, (_, i) => html`<div class="cm"><svg viewBox="0 0 44 19" width="44" height="19">${ticks}</svg><span>${i + 11}</span></div>`)}</div>
                    <div class="canvas">
                      <article class="page">
                        <h3>verzeichnis</h3>
                        ${contents.map(([t, n, k]) => html`<div class="entry ${k}"><span>${t}</span><span class="leader"></span><span class="num">${n}</span></div>`)}
                      </article>
                    </div>
                  </div>
                  <div class="rail">
                    <scroll-bar .before=${10} .size=${41}></scroll-bar>
                    <div class="jump">
                      <button aria-label="Erste Seite">${glyph('M1 1.500h8M2 7h6M3.500 5.500h3M5 3v4', 10)}</button>
                      <button aria-label="Seite zurück">${glyph('M3 4h4M5 1.500v5M2.500 7.500h5', 10)}</button>
                      <button aria-label="Gehe zu Seite">${glyph('M3.500 1v8M6.500 1v8M1 3.500h8M1 6.500h8', 10)}</button>
                      <button aria-label="Seite vor">${glyph('M2.500 2.500h5M5 3v6M3 6.500h4', 10)}</button>
                      <button aria-label="Letzte Seite">${glyph('M2 2.500h6M3.500 4h3M5 3v4M1 8h8', 10)}</button>
                    </div>
                  </div>
                </div>
              </section>
            </div>
          </section>
        </div>

        <footer class="status">
          <button class="item start">${icon('bmd')}<span>BMD-Start (F9)</span></button>
          <span class="item user">${icon('users')}<span>hac563 (59)</span></span>
          <span class="item">${icon('db')}<span>BMDFS1\\BMD:BMDDEMO_STB</span></span>
          <span class="item flag">${icon('flag')}</span>
          <span class="item">${icon('home')}<span>Firma: 1 Dr. Steyrer &amp; Partner</span></span>
        </footer>
      </main>
    </div>`;
  }
}
